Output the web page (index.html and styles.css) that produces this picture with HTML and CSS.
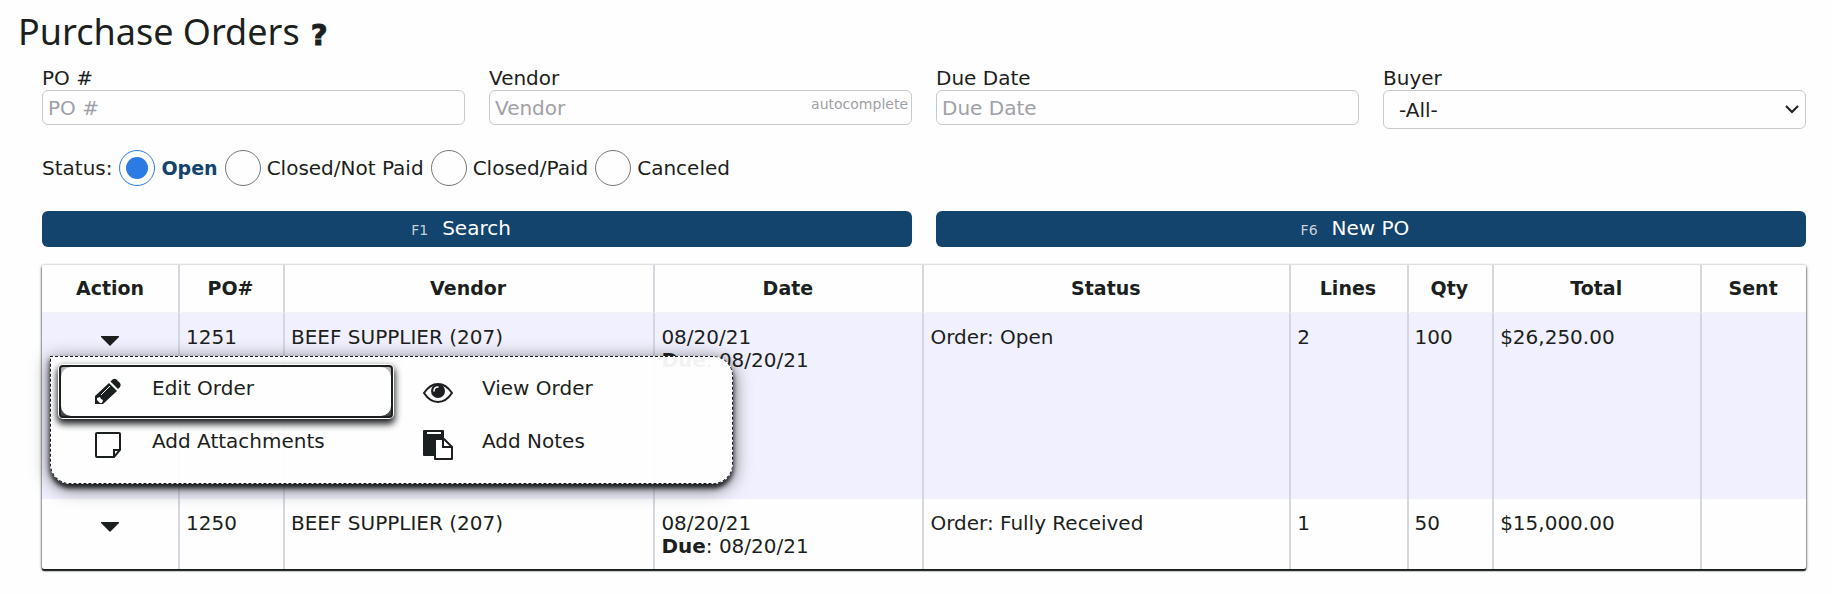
FILE: index.html
```html
<!DOCTYPE html>
<html lang="en">
<head>
    <meta charset="UTF-8">
    <meta name="viewport" content="width=device-width, initial-scale=1.0">
    <title>Purchase Orders</title>
    <link rel="stylesheet" href="styles.css">
</head>
<body>
    <header class="page-header">
        <h1>Purchase Orders</h1>
        <a href="#" class="help">?</a>
    </header>

    <main>
        <form class="filters">
            <div class="fields">
                <div class="field">
                    <label for="po">PO #</label>
                    <input type="text" id="po" placeholder="PO #">
                </div>
                <div class="field">
                    <label for="vendor">Vendor</label>
                    <div class="control">
                        <input type="text" id="vendor" placeholder="Vendor">
                        <span class="hint">autocomplete</span>
                    </div>
                </div>
                <div class="field">
                    <label for="due">Due Date</label>
                    <input type="text" id="due" placeholder="Due Date">
                </div>
                <div class="field">
                    <label for="buyer">Buyer</label>
                    <div class="control">
                        <select id="buyer">
                            <option>-All-</option>
                        </select>
                        <svg class="chevron" viewBox="0 0 14 10" width="14" height="10"><path d="M1 2l6 6 6-6" fill="none" stroke="currentColor" stroke-width="2"/></svg>
                    </div>
                </div>
            </div>

            <div class="status" role="radiogroup" aria-labelledby="status-label">
                <span id="status-label">Status:</span>
                <input type="radio" name="status" id="st-open" checked><label for="st-open">Open</label>
                <input type="radio" name="status" id="st-notpaid"><label for="st-notpaid">Closed/Not Paid</label>
                <input type="radio" name="status" id="st-paid"><label for="st-paid">Closed/Paid</label>
                <input type="radio" name="status" id="st-canceled"><label for="st-canceled">Canceled</label>
            </div>

            <div class="buttons">
                <button type="button" class="btn"><small>F1</small>Search</button>
                <button type="button" class="btn"><small>F6</small>New PO</button>
            </div>
        </form>

        <table class="orders">
            <thead>
                <tr>
                    <th class="col-action">Action</th>
                    <th class="col-po">PO#</th>
                    <th class="col-vendor">Vendor</th>
                    <th class="col-date">Date</th>
                    <th class="col-status">Status</th>
                    <th class="col-lines">Lines</th>
                    <th class="col-qty">Qty</th>
                    <th class="col-total">Total</th>
                    <th class="col-sent">Sent</th>
                </tr>
            </thead>
            <tbody>
                <tr class="expanded">
                    <td class="action">
                        <button type="button" class="caret" aria-label="Actions" aria-expanded="true">
                            <svg viewBox="0 0 18 10" width="18" height="10"><path d="M0 0h18v1L9 10 0 1z" fill="currentColor"/></svg>
                        </button>
                        <ul class="menu">
                            <li class="focused">
                                <button type="button">
                                    <svg viewBox="0 0 30 30" width="30" height="30"><path fill="currentColor" d="M2 27v-8l14-13 8 8-14 13zM17.500 4.500l2-2q2-1.500 4 0l3.500 3.500q1.500 2 0 4l-2 2z"/><path d="M8 18L17 9" stroke="#fff" stroke-width="1"/><path fill="#fff" d="M4 21l3-1 1 2 2 1-1 3H7l-3-3z"/></svg>
                                    <span>Edit Order</span>
                                </button>
                            </li>
                            <li>
                                <button type="button">
                                    <svg viewBox="0 0 30 30" width="30" height="30"><path d="M1 16Q7 7 15 7t14 9q-6 9-14 9T1 16z" fill="none" stroke="currentColor" stroke-width="2"/><circle cx="15" cy="14" r="7" fill="currentColor"/><path d="M11 14q0-4 4-4" fill="none" stroke="#fff" stroke-width="1.500" stroke-linecap="round"/></svg>
                                    <span>View Order</span>
                                </button>
                            </li>
                            <li>
                                <button type="button">
                                    <svg viewBox="0 0 30 30" width="30" height="30"><path d="M4 3h22q1 0 1 1v16l-6 7H4q-1 0-1-1V4q0-1 1-1z" fill="none" stroke="currentColor" stroke-width="2"/><path d="M27 20h-6v7" fill="none" stroke="currentColor" stroke-width="2"/></svg>
                                    <span>Add Attachments</span>
                                </button>
                            </li>
                            <li>
                                <button type="button">
                                    <svg viewBox="0 0 30 30" width="30" height="30"><path d="M1 0h19q1 0 1 1v25H1q-1 0-1-1V1q0-1 1-1z" fill="currentColor"/><path d="M4 2h14v2H4z" fill="#fff"/><path d="M12 9h9l8 8v12H12z" fill="#fff" stroke="currentColor" stroke-width="2" stroke-linejoin="round"/><path d="M20 9v8h9" fill="none" stroke="currentColor" stroke-width="2"/></svg>
                                    <span>Add Notes</span>
                                </button>
                            </li>
                        </ul>
                    </td>
                    <td>1251</td>
                    <td>BEEF SUPPLIER (207)</td>
                    <td>08/20/21<br><b>Due</b>: 08/20/21</td>
                    <td>Order: Open</td>
                    <td>2</td>
                    <td>100</td>
                    <td>$26,250.00</td>
                    <td></td>
                </tr>
                <tr>
                    <td class="action">
                        <button type="button" class="caret" aria-label="Actions">
                            <svg viewBox="0 0 18 10" width="18" height="10"><path d="M0 0h18v1L9 10 0 1z" fill="currentColor"/></svg>
                        </button>
                    </td>
                    <td>1250</td>
                    <td>BEEF SUPPLIER (207)</td>
                    <td>08/20/21<br><b>Due</b>: 08/20/21</td>
                    <td>Order: Fully Received</td>
                    <td>1</td>
                    <td>50</td>
                    <td>$15,000.00</td>
                    <td></td>
                </tr>
            </tbody>
        </table>
    </main>
</body>
</html>
```
FILE: styles.css
```css
* {
    box-sizing: border-box;
}

body {
    margin: 0;
    background: #fefefe;
    color: #1c1f20;
    font-family: Verdana, 'DejaVu Sans', sans-serif;
    font-size: 20px;
    line-height: 23px;
}

button, input, select {
    font: inherit;
    color: inherit;
}

.page-header {
    display: flex;
    align-items: baseline;
    gap: 11px;
    padding: 7px 18px 0;
}

h1 {
    margin: 0;
    font-family: 'Segoe UI', 'Noto Sans', sans-serif;
    font-size: 36px;
    font-weight: 400;
    line-height: 50px;
}

.help {
    color: inherit;
    font-size: 29px;
    font-weight: bold;
    text-decoration: none;
    -webkit-text-stroke: 1px;
}

main {
    padding: 10px 26px 16px 42px;
}

/* Filters */
.fields {
    display: grid;
    grid-template-columns: repeat(4, 1fr);
    align-items: start;
    gap: 24px;
}

.field label {
    display: block;
}

.control {
    position: relative;
}

.field input, .field select {
    display: block;
    width: 100%;
    height: 35px;
    padding: 0 5px;
    background: #fefefe;
    border: 1px solid #c8c9cb;
    border-radius: 6px;
}

.field select {
    appearance: none;
    height: 39px;
    padding: 1px 15px 0;
}

.field input::placeholder {
    color: #a0a1a6;
    opacity: 1;
}

.hint {
    position: absolute;
    top: 3px;
    right: 4px;
    color: #a0a1a6;
    font-size: 14px;
}

.chevron {
    position: absolute;
    top: 14px;
    right: 7px;
    pointer-events: none;
}

.status {
    display: flex;
    align-items: center;
    margin-top: 21px;
}

.status input {
    display: grid;
    place-items: center;
    appearance: none;
    width: 36px;
    height: 36px;
    margin: 0 6px 0 7px;
    background: #fefefe;
    border: 1px solid #767676;
    border-radius: 50%;
}

.status input:checked {
    border-color: #2c7be5;
}

.status input:checked::before {
    content: '';
    width: 22px;
    height: 22px;
    background: #2c7be5;
    border-radius: 50%;
}

.status input:checked + label {
    color: #13446d;
    font-size: 19px;
    font-weight: bold;
}

.buttons {
    display: grid;
    grid-template-columns: 1fr 1fr;
    gap: 24px;
    margin-top: 25px;
}

.btn {
    height: 36px;
    padding: 1px 32px 0 0;
    background: #13446d;
    color: #fff;
    border: 0;
    border-radius: 6px;
}

.btn small {
    margin-right: 14px;
    color: #c8d0d8;
    font-size: 14px;
}

/* Orders table */
.orders {
    width: 100%;
    margin-top: 18px;
    table-layout: fixed;
    border-collapse: separate;
    border-spacing: 0;
    background: #fefefe;
    border-radius: 2px;
    box-shadow: 0 1px 3px #1c1f20, 0 2px 1px #1c1f20;
}

.orders th {
    padding: 12px 8px;
    font-size: 19px;
}

.orders td {
    padding: 13px 8px 11px;
    vertical-align: top;
}

.orders th + th, .orders td + td {
    border-left: 2px solid #d5d7df;
    padding-left: 6px;
}

.orders .expanded td {
    height: 187px;
    background: #f1f0fe;
    border-top: 1px solid #f2f1f3;
}

.col-action { width: 136px; }
.col-po { width: 5.950%; }
.col-vendor { width: 21%; }
.col-date { width: 15.250%; }
.col-status { width: 20.800%; }
.col-lines { width: 6.650%; }
.col-qty { width: 4.850%; }
.col-total { width: 11.800%; }

.action {
    position: relative;
    text-align: center;
}

.caret {
    padding: 2px 0 0;
    background: none;
    border: 0;
}

/* Row menu */
.menu {
    position: absolute;
    z-index: 1;
    top: 43px;
    left: 8px;
    display: grid;
    grid-template-columns: 330px 330px;
    width: 683px;
    margin: 0;
    padding: 8px 8px 12px;
    list-style: none;
    text-align: left;
    background: rgba(254, 254, 254, 0.95);
    border: 1px dashed #1c1f20;
    border-radius: 0 20px 20px 20px;
    box-shadow: 0 4px 5px #1c1f20, 0 4px 18px rgba(28, 31, 32, 0.7);
}

.menu button {
    display: flex;
    gap: 29px;
    width: 100%;
    height: 53px;
    padding: 12px 34px;
    background: none;
    border: 0;
    text-align: left;
}

.menu .focused {
    width: 334px;
    background: linear-gradient(#bbb, #444);
    border: 2px solid #1c1f20;
    border-radius: 4px;
    box-shadow: 0 0 0 1px #fefefe, 0 4px 7px 2px #1c1f20;
}

.menu .focused button {
    height: 49px;
    padding: 10px 32px;
    background: #fefefe;
    border-radius: 10px;
}
```
